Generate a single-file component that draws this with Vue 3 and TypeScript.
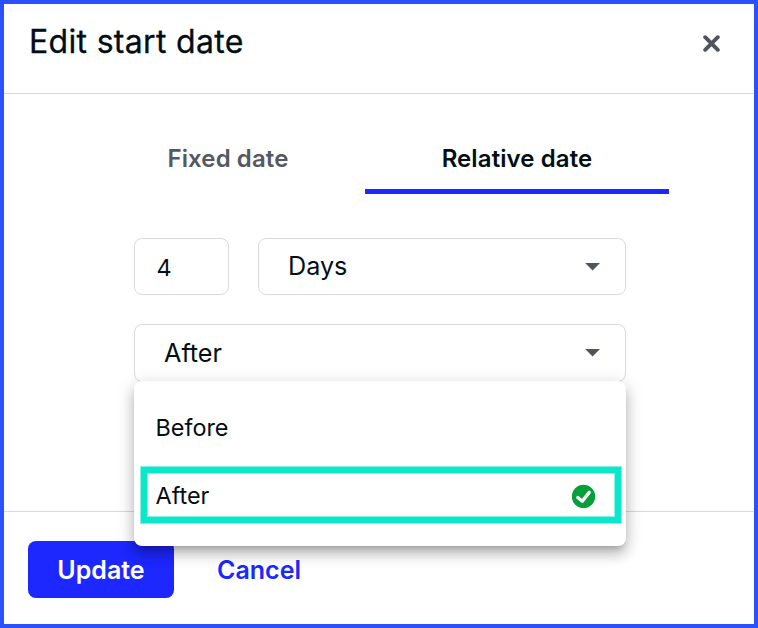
<script setup lang="ts">
import { ref } from 'vue'

type Tab = { id: string; label: string }

const tabs: Tab[] = [
  { id: 'fixed', label: 'Fixed date' },
  { id: 'relative', label: 'Relative date' },
]
const activeTab = ref('relative')
const amount = ref('4')
const unit = ref('Days')
const directions: string[] = ['Before', 'After']
const direction = ref('After')
</script>

<template>
  <section class="dialog" role="dialog" aria-labelledby="dialog-title">
    <header class="header">
      <h1 id="dialog-title" class="title">Edit start date</h1>
      <button class="close" type="button" aria-label="Close">
        <svg width="18" height="18" viewBox="0 0 18 18">
          <path d="M2.2 2.2 14.8 14.8M14.8 2.2 2.2 14.8" />
        </svg>
      </button>
    </header>

    <main class="body">
      <nav class="tabs">
        <button
          v-for="tab in tabs"
          :key="tab.id"
          type="button"
          class="tab"
          :class="[tab.id, { active: tab.id === activeTab }]"
          @click="activeTab = tab.id"
        >
          {{ tab.label }}
        </button>
      </nav>

      <div class="form">
        <div class="row">
          <input v-model="amount" class="field amount" type="text" aria-label="Amount" />
          <div class="field select">
            <span class="value unit">{{ unit }}</span>
            <svg class="caret" width="16" height="8" viewBox="0 0 16 8"><path d="M0.2 0H15L7.6 7.4Z" /></svg>
          </div>
        </div>
        <div class="picker">
          <div class="field select open">
            <span class="value">{{ direction }}</span>
            <svg class="caret" width="16" height="8" viewBox="0 0 16 8"><path d="M0.2 0H15L7.6 7.4Z" /></svg>
          </div>
          <ul class="menu">
            <li
              v-for="item in directions"
              :key="item"
              class="option"
              :class="{ selected: item === direction }"
              @click="direction = item"
            >
              <span>{{ item }}</span>
              <svg v-if="item === direction" class="check" width="24" height="24" viewBox="0 0 24 24">
                <circle cx="11.5" cy="12.5" r="11.7" />
                <path d="M5.8 13.5 10.3 17.2 17.2 8.4" />
              </svg>
            </li>
          </ul>
        </div>
      </div>
    </main>

    <footer class="footer">
      <button class="update" type="button">Update</button>
      <button class="cancel" type="button">Cancel</button>
    </footer>
  </section>
</template>

<style>
body {
  margin: 0;
}
</style>

<style scoped>
.dialog {
  box-sizing: border-box;
  width: 758px;
  height: 628px;
  border: 4px solid #2b50ff;
  background: #fff;
  color: #020e16;
  font-family: Inter, 'Liberation Sans', sans-serif;
  display: flex;
  flex-direction: column;
}
button {
  font: inherit;
  color: inherit;
  background: none;
  border: 0;
  padding: 0;
  margin: 0;
}
.header {
  box-sizing: border-box;
  height: 90px;
  border-bottom: 1px solid #d9d9db;
  padding: 18px 33px 0 25px;
  display: flex;
  justify-content: space-between;
  align-items: flex-start;
}
.title {
  margin: 0;
  font-size: 32px;
  line-height: 40px;
  font-weight: 400;
  letter-spacing: 0.32px;
  -webkit-text-stroke: 0.3px currentColor;
}
.close {
  width: 18px;
  height: 18px;
  margin-top: 13px;
}
.close svg {
  display: block;
  fill: none;
  stroke: #50545c;
  stroke-width: 3.9;
  stroke-linecap: round;
}
.body {
  flex: 1;
  padding-top: 34px;
}
.tabs {
  display: flex;
  padding-left: 87px;
}
.tab {
  box-sizing: border-box;
  height: 66px;
  border-bottom: 5px solid transparent;
  font-size: 24px;
  line-height: 61px;
  font-weight: 600;
  letter-spacing: 0.1px;
  color: #555861;
  white-space: nowrap;
}
.fixed {
  width: 274px;
}
.relative {
  width: 304px;
}
.active {
  color: #020e16;
  border-color: #1d27ff;
}
.form {
  width: 492px;
  margin: 44px 0 0 130px;
  display: flex;
  flex-direction: column;
  gap: 29px;
}
.row {
  display: flex;
  gap: 29px;
}
.field {
  box-sizing: border-box;
  height: 57px;
  border: 1px solid #dadada;
  border-radius: 8px;
  background: #fff;
  font-size: 25.2px;
}
.amount {
  width: 95px;
  padding: 2px 0 0 21.5px;
  font-family: inherit;
  font-size: 23.4px;
  color: #020e16;
  outline: none;
}
.select {
  flex: 1;
  display: flex;
  align-items: center;
  justify-content: space-between;
  padding: 0 24px 0 29px;
}
.unit {
  padding-bottom: 2px;
}
.open {
  height: 58px;
  padding-bottom: 1px;
}
.caret {
  fill: #50545c;
}
.picker {
  position: relative;
}
.menu {
  position: absolute;
  z-index: 1;
  top: 57px;
  left: 0;
  box-sizing: border-box;
  width: 492px;
  height: 165px;
  margin: 0;
  padding: 17px 4px 22px 6px;
  list-style: none;
  background: #fff;
  border-radius: 8px;
  box-shadow:
    0 6px 6px -4px rgba(0, 0, 0, 0.2),
    0 9px 12px 1px rgba(0, 0, 0, 0.14),
    0 4px 17px 2px rgba(0, 0, 0, 0.14);
  display: flex;
  flex-direction: column;
  justify-content: space-between;
}
.option {
  box-sizing: border-box;
  height: 58px;
  padding: 0 25px 0 14.5px;
  border: 1px solid transparent;
  display: flex;
  align-items: center;
  justify-content: space-between;
  font-size: 23.4px;
}
.selected {
  border-color: #85f3e4;
  box-shadow:
    inset 0 0 0 6px #0be7ca,
    inset 0 0 0 7px #85f3e4;
}
.check {
  position: relative;
  top: 1px;
}
.check circle {
  fill: #079f39;
}
.check path {
  fill: none;
  stroke: #fff;
  stroke-width: 3.4;
  stroke-linecap: round;
  stroke-linejoin: round;
}
.footer {
  box-sizing: border-box;
  height: 113px;
  border-top: 1px solid #d9d9db;
  padding: 29px 24px 0;
  display: flex;
  align-items: flex-start;
  gap: 43px;
  font-size: 25px;
  font-weight: 600;
}
.update {
  width: 146px;
  height: 57px;
  border-radius: 8px;
  background: #1d27ff;
  color: #fff;
}
.cancel {
  height: 57px;
  color: #1d27ff;
}
</style>
